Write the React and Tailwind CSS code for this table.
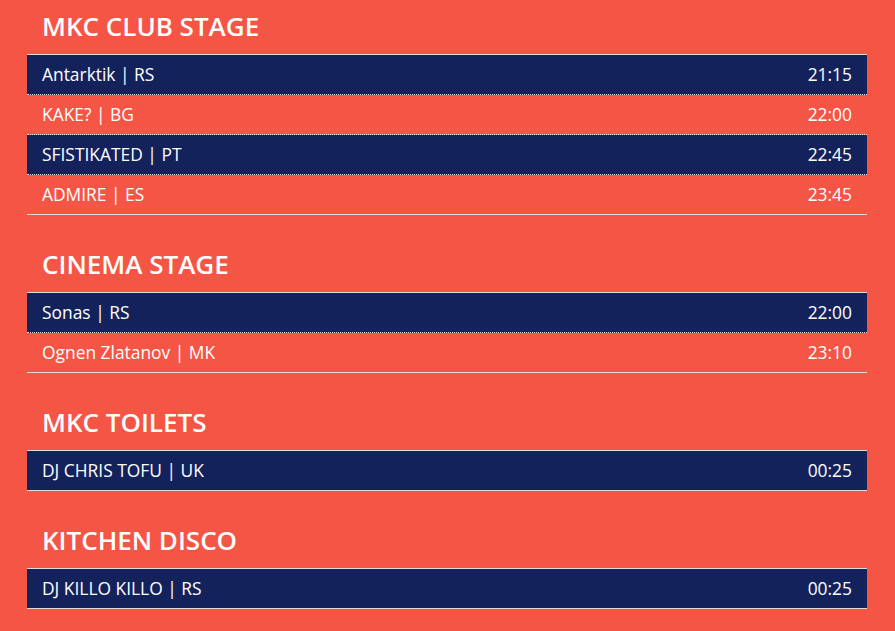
import React from "react";

const stages = [
  {
    name: "MKC CLUB STAGE",
    acts: [
      ["Antarktik | RS", "21:15"],
      ["KAKE? | BG", "22:00"],
      ["SFISTIKATED | PT", "22:45"],
      ["ADMIRE | ES", "23:45"],
    ],
  },
  {
    name: "CINEMA STAGE",
    acts: [
      ["Sonas | RS", "22:00"],
      ["Ognen Zlatanov | MK", "23:10"],
    ],
  },
  { name: "MKC TOILETS", acts: [["DJ CHRIS TOFU | UK", "00:25"]] },
  { name: "KITCHEN DISCO", acts: [["DJ KILLO KILLO | RS", "00:25"]] },
];

function Stage({ stage }) {
  return (
    <section className="mb-[23px]">
      <h2 className="h-[54px] pl-[15px] pt-[8px] text-[26px] font-semibold leading-[36px] text-white">
        {stage.name}
      </h2>
      <div className="border-t border-[#e0dcdc]">
        {stage.acts.map(([act, time], i) => {
          const last = i === stage.acts.length - 1;
          return (
            <div
              key={act}
              className={
                "flex h-[40px] items-center justify-between border-b px-[15px] text-[17.4px] text-white " +
                (i % 2 === 0 ? "bg-[#14225c] " : "bg-[#f55545] ") +
                (last ? "border-solid border-[#e0dcdc]" : "border-dotted border-[#e8e4e4]")
              }
            >
              <span>{act}</span>
              <span>{time}</span>
            </div>
          );
        })}
      </div>
    </section>
  );
}

export default function App() {
  return (
    <div
      className="min-h-[631px] bg-[#f55545] pl-[27px] pr-[28px]"
      style={{ fontFamily: '"Open Sans", sans-serif' }}
    >
      {stages.map((s) => (
        <Stage key={s.name} stage={s} />
      ))}
    </div>
  );
}
